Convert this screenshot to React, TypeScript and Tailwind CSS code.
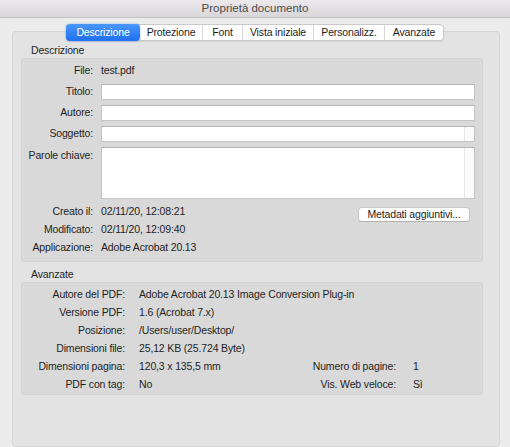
import React from 'react';

const tabs = ['Descrizione', 'Protezione', 'Font', 'Vista iniziale', 'Personalizz.', 'Avanzate'];
const tabWidths = ['w-[74px]', 'w-[62px]', 'w-[40px]', 'w-[71px]', 'w-[71px]', 'w-[59px]'];

function Field({ label, tall, scroll }: { label: string; tall?: boolean; scroll?: boolean }) {
  return (
    <div className={`flex ${tall ? 'items-start' : 'items-center'}`}>
      <div className={`w-[71px] shrink-0 text-right ${tall ? 'pt-[1px]' : ''}`}>{label}</div>
      <div
        className={`ml-[8px] flex-1 flex bg-white border border-[#c4c4c4] border-t-[#b5b5b5] ${
          tall ? 'h-[52px]' : 'h-[16px]'
        }`}
      >
        <div className="flex-1" />
        {scroll && <div className="w-[10px] border-l border-[#e6e6e6] bg-[#fbfbfb]" />}
      </div>
    </div>
  );
}

function InfoRow({ label, value }: { label: string; value: string }) {
  return (
    <div className="flex items-center h-[18px]">
      <div className="w-[71px] shrink-0 text-right">{label}</div>
      <div className="ml-[8px]">{value}</div>
    </div>
  );
}

function AdvRow({
  label,
  value,
  rLabel,
  rValue,
}: {
  label: string;
  value: string;
  rLabel?: string;
  rValue?: string;
}) {
  return (
    <div className="flex items-center h-[18px] whitespace-nowrap">
      <div className="w-[103px] shrink-0 text-right">{label}</div>
      <div className={`ml-[14px] ${rLabel ? 'w-[163px] shrink-0' : ''}`}>{value}</div>
      {rLabel && (
        <>
          <div className="w-[94px] shrink-0 text-right">{rLabel}</div>
          <div className="ml-[17px]">{rValue}</div>
        </>
      )}
    </div>
  );
}

export default function App() {
  return (
    <div
      className="w-[510px] h-[447px] overflow-hidden bg-[#ececec] text-[10.5px] tracking-[-0.15px] text-[#1e1e1e] flex flex-col"
      style={{ fontFamily: '"Liberation Sans", Arial, sans-serif' }}
    >
      {/* title bar */}
      <div className="h-[18px] shrink-0 flex items-center justify-center bg-gradient-to-b from-[#ebe9eb] to-[#d9d7d9] border-b border-[#c2c2c2] text-[11.5px] tracking-normal text-[#4b4b4b]">
        Proprietà documento
      </div>

      {/* tabs */}
      <div className="mt-[6px] flex justify-center relative z-10">
        <div className="flex h-[17px] rounded-[4px] bg-white border border-[#c9c9c9] shadow-[0_1px_1px_rgba(0,0,0,0.08)]">
          {tabs.map((t, i) => (
            <div
              key={t}
              className={`${tabWidths[i]} flex items-center justify-center ${
                i === 0
                  ? 'bg-gradient-to-b from-[#4a97fa] to-[#1f6ff1] text-white font-medium rounded-[4px] -my-[1px] -ml-[1px] shadow-[0_0_2px_rgba(40,110,240,0.6)]'
                  : i > 1
                  ? 'border-l border-[#d6d6d6]'
                  : ''
              }`}
            >
              {t}
            </div>
          ))}
        </div>
      </div>

      {/* tab panel */}
      <div className="-mt-[10px] ml-[12px] mr-[10px] flex-1 bg-[#e3e3e3] border border-[#d5d5d5] rounded-[4px] pt-[12px] pl-[8px] pr-[16px]">
        <div className="h-[14px] pl-[10px] flex items-center">Descrizione</div>
        <div className="bg-[#d9d9d9] rounded-[3px] border border-[#d3d3d3] pl-0 pr-[7px] pt-[4px] pb-[4px]">
          <div className="flex flex-col gap-[5px]">
            <div className="flex items-center h-[16px]">
              <div className="w-[71px] shrink-0 text-right">File:</div>
              <div className="ml-[8px]">test.pdf</div>
            </div>
            <Field label="Titolo:" />
            <Field label="Autore:" />
            <Field label="Soggetto:" scroll />
            <Field label="Parole chiave:" tall scroll />
          </div>
          <div className="mt-[4px] flex flex-col">
            <div className="flex items-center h-[18px]">
              <div className="w-[71px] shrink-0 text-right">Creato il:</div>
              <div className="ml-[8px] flex-1">02/11/20, 12:08:21</div>
              <div className="mr-[5px] mt-[5px] w-[112px] h-[15px] flex items-center justify-center bg-white border border-[#c6c6c6] border-b-[#b0b0b0] rounded-[4px]">
                Metadati aggiuntivi...
              </div>
            </div>
            <InfoRow label="Modificato:" value="02/11/20, 12:09:40" />
            <InfoRow label="Applicazione:" value="Adobe Acrobat 20.13" />
          </div>
        </div>

        <div className="mt-[6px] h-[14px] pl-[10px] flex items-center">Avanzate</div>
        <div className="bg-[#d9d9d9] rounded-[3px] border border-[#d3d3d3] pt-[3px] pb-0">
          <AdvRow label="Autore del PDF:" value="Adobe Acrobat 20.13 Image Conversion Plug-in" />
          <AdvRow label="Versione PDF:" value="1.6 (Acrobat 7.x)" />
          <AdvRow label="Posizione:" value="/Users/user/Desktop/" />
          <AdvRow label="Dimensioni file:" value="25,12 KB (25.724 Byte)" />
          <AdvRow label="Dimensioni pagina:" value="120,3 x 135,5 mm" rLabel="Numero di pagine:" rValue="1" />
          <AdvRow label="PDF con tag:" value="No" rLabel="Vis. Web veloce:" rValue="Sì" />
        </div>
      </div>
    </div>
  );
}
